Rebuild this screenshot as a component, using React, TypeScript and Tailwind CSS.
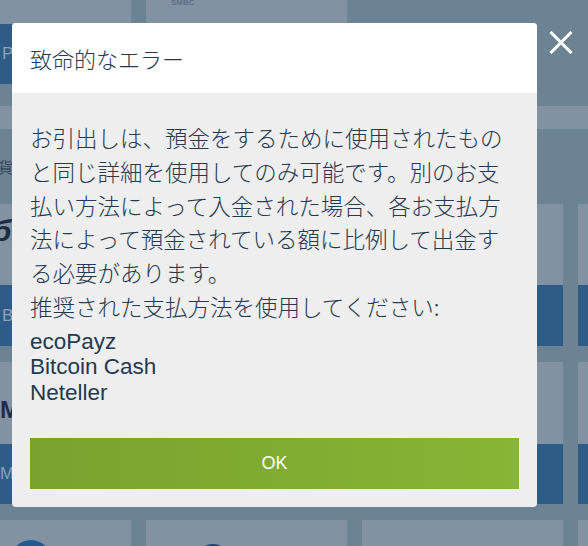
const jp = { fontFamily: '"Noto Sans CJK JP", "Liberation Sans", sans-serif' };
const latin = { fontFamily: '"Liberation Sans", "Noto Sans CJK JP", sans-serif' };

function Card({ topH, bottomH, top, bottom }: { topH: string; bottomH: string; top?: React.ReactNode; bottom?: React.ReactNode }) {
  return (
    <div className="w-[201px] shrink-0 flex flex-col">
      <div className={`${topH} bg-[#8392a2] overflow-hidden relative`}>{top}</div>
      <div className={`${bottomH} bg-[#2f5c86] overflow-hidden flex items-center`}>{bottom}</div>
    </div>
  );
}

function Backdrop() {
  return (
    <div className="flex flex-col" style={latin}>
      <div className="flex gap-[15px] -ml-[70px]">
        <Card topH="h-[24px]" bottomH="h-[60px]" bottom={<span className="pl-[72px] text-[17px] text-[#8ea0b4]">Pay</span>} />
        <Card
          topH="h-[24px]"
          bottomH="h-[60px]"
          top={<div className="-mt-[3px] pl-[25px] text-[8px] font-bold text-[#5b6f86]">SMBC</div>}
        />
      </div>
      <div className="h-[22px]" />
      <div className="h-[23px] bg-[#8392a2]" />
      <div className="h-[75px] flex items-center -ml-[17px] pt-[2px]">
        <span className="text-[15px] text-[#34475b]" style={jp}>通貨</span>
      </div>
      <div className="flex gap-[15px] -ml-[70px]">
        <Card
          topH="h-[81px]"
          bottomH="h-[61px]"
          top={<div className="pl-[46px] pt-[4px] text-[30px] font-bold italic text-[#1d2e42]">eбь</div>}
          bottom={<span className="pl-[72px] text-[17px] text-[#8ea0b4]">Bit</span>}
        />
        <Card topH="h-[81px]" bottomH="h-[61px]" />
        <Card topH="h-[81px]" bottomH="h-[61px]" />
        <Card topH="h-[81px]" bottomH="h-[61px]" />
      </div>
      <div className="h-[16px]" />
      <div className="flex gap-[15px] -ml-[70px]">
        <Card
          topH="h-[82px]"
          bottomH="h-[60px]"
          top={<div className="pl-[54px] pt-[30px] text-[24px] font-bold text-[#1d2e42]">ɅM</div>}
          bottom={<span className="pl-[70px] text-[17px] text-[#8ea0b4]">M</span>}
        />
        <Card topH="h-[82px]" bottomH="h-[60px]" />
        <Card topH="h-[82px]" bottomH="h-[60px]" />
        <Card topH="h-[82px]" bottomH="h-[60px]" />
      </div>
      <div className="h-[16px]" />
      <div className="flex gap-[15px] -ml-[70px]">
        <div className="w-[201px] h-[60px] shrink-0 bg-[#8392a2] flex justify-center pt-[20px]">
          <div className="w-[40px] h-[40px] rounded-full bg-[#1f5a90]" />
        </div>
        <div className="w-[201px] h-[60px] shrink-0 bg-[#8392a2] pl-[49px] pt-[24px]">
          <div className="w-[36px] h-[36px] rounded-full bg-[#1f5a90] border-[3px] border-[#1a4670]" />
        </div>
        <div className="w-[201px] h-[60px] shrink-0 bg-[#8392a2]" />
        <div className="w-[201px] h-[60px] shrink-0 bg-[#8392a2]" />
      </div>
    </div>
  );
}

export default function App() {
  return (
    <div className="relative w-[588px] h-[546px] overflow-hidden bg-[#6c8393]">
      <Backdrop />

      <button className="absolute left-[549px] top-[31px]">
        <svg width="24" height="23" viewBox="0 0 24 23" fill="none" stroke="white" strokeWidth="3">
          <path d="M1.5 1 L22.5 22 M22.5 1 L1.5 22" />
        </svg>
      </button>

      <div className="absolute left-[12px] top-[23px] w-[525px] rounded-[4px] overflow-hidden bg-[#eeeeee] text-[#24384f]">
        <div className="h-[70px] bg-white flex items-center px-[18px]">
          <h2 className="text-[22px] leading-none font-light" style={jp}>致命的なエラー</h2>
        </div>
        <div className="px-[18px] pt-[28px] pb-[18px]">
          <p className="text-[22.5px] leading-[33.75px] font-light" style={jp}>
            お引出しは、預金をするために使用されたものと同じ詳細を使用してのみ可能です。別のお支払い方法によって入金された場合、各お支払方法によって預金されている額に比例して出金する必要があります。
            <br />
            推奨された支払方法を使用してください:
          </p>
          <ul className="mt-[5px] text-[22.5px] leading-[25.5px]" style={latin}>
            <li>ecoPayz</li>
            <li>Bitcoin Cash</li>
            <li>Neteller</li>
          </ul>
          <button
            className="mt-[33px] w-full h-[51px] bg-gradient-to-r from-[#7aa22f] to-[#87b535] text-white text-[18px]"
            style={latin}
          >
            OK
          </button>
        </div>
      </div>
    </div>
  );
}
